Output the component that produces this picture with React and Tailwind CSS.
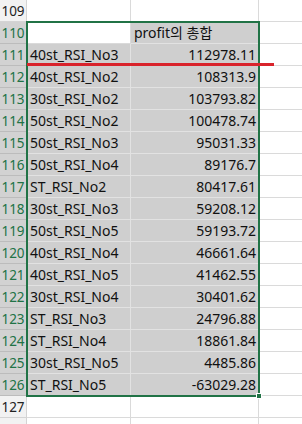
import React from 'react'

const rows = [
  ['40st_RSI_No3', '112978.11'],
  ['40st_RSI_No2', '108313.9'],
  ['30st_RSI_No2', '103793.82'],
  ['50st_RSI_No2', '100478.74'],
  ['50st_RSI_No3', '95031.33'],
  ['50st_RSI_No4', '89176.7'],
  ['ST_RSI_No2', '80417.61'],
  ['30st_RSI_No3', '59208.12'],
  ['50st_RSI_No5', '59193.72'],
  ['40st_RSI_No4', '46661.64'],
  ['40st_RSI_No5', '41462.55'],
  ['30st_RSI_No4', '30401.62'],
  ['ST_RSI_No3', '24796.88'],
  ['ST_RSI_No4', '18861.84'],
  ['30st_RSI_No5', '4485.86'],
  ['ST_RSI_No5', '-63029.28'],
]

function Row({ num, a, b, selected, filledA, filledB, alignB = 'right' }) {
  return (
    <div className="flex h-[22px]">
      <div
        className={`w-[27px] shrink-0 flex items-end justify-center pb-[1px] border-b border-r text-[13.5px] leading-[18px] ${
          selected
            ? 'bg-[#d2d2d2] text-[#217346] border-[#bcbcbc]'
            : 'bg-[#f2f2f2] text-[#222] border-[#d4d4d4]'
        }`}
      >
        {num}
      </div>
      <div
        className={`w-[104px] shrink-0 flex items-end pl-[3px] pb-[1px] border-b border-r overflow-visible whitespace-nowrap ${
          filledA ? 'bg-[#cfcfcf] border-[#e2e2e2]' : 'bg-white border-[#dadada]'
        }`}
      >
        {a}
      </div>
      <div
        className={`w-[128px] shrink-0 flex items-end pr-[2px] pl-[3px] pb-[1px] border-b border-r whitespace-nowrap ${
          alignB === 'right' ? 'justify-end' : 'justify-start'
        } ${filledB ? 'bg-[#cfcfcf] border-[#e2e2e2]' : 'bg-white border-[#dadada]'}`}
      >
        {b}
      </div>
      <div className="flex-1 bg-white border-b border-[#dadada]" />
    </div>
  )
}

export default function App() {
  return (
    <div
      className="relative w-[302px] h-[424px] overflow-hidden bg-white text-[14px] leading-[18px] text-[#111]"
      style={{ fontFamily: '"Noto Sans", "Noto Sans CJK KR", sans-serif' }}
    >
      <Row num="109" a="" b="" />
      <Row num="110" a="" b="profit의 총합" selected filledB alignB="left" />
      {rows.map((r, i) => (
        <Row key={i} num={String(111 + i)} a={r[0]} b={r[1]} selected filledA filledB />
      ))}
      <Row num="127" a="" b="" />
      <Row num="" a="" b="" />

      {/* selection border */}
      <div className="absolute left-[26px] top-[21px] w-[234px] h-[376px] border-2 border-[#217346] pointer-events-none" />
      {/* fill handle */}
      <div className="absolute left-[256px] top-[393px] w-[6px] h-[6px] bg-[#217346] border border-white" />
      {/* red line */}
      <div className="absolute left-[27px] top-[63px] w-[247px] h-[3px] bg-[#d9232b]" />
    </div>
  )
}
